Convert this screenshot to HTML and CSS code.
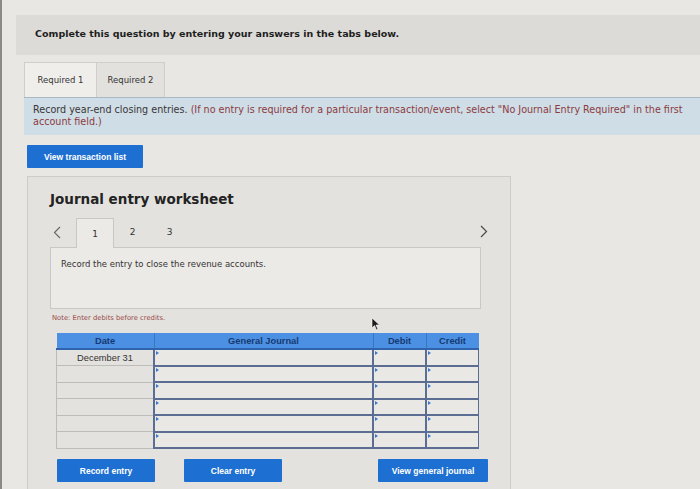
FILE: index.html
```html
<!DOCTYPE html>
<html lang="en">
<head>
    <meta charset="UTF-8">
    <meta name="viewport" content="width=device-width, initial-scale=1.0">
    <title>Journal entry worksheet</title>
    <link rel="stylesheet" href="styles.css">
</head>
<body>
    <div class="page">
        <div class="banner">Complete this question by entering your answers in the tabs below.</div>
        <div class="content">
            <div class="tabs">
                <div class="tab active">Required 1</div>
                <div class="tab">Required 2</div>
            </div>
            <p class="instructions">Record year-end closing entries. <span class="hint">(If no entry is required for a particular transaction/event, select "No Journal Entry Required" in the first account field.)</span></p>
            <button class="btn btn-list">View transaction list</button>

            <div class="worksheet">
                <h2>Journal entry worksheet</h2>
                <div class="pager">
                    <span class="arrow"><svg width="8" height="13" viewBox="0 0 8 13"><polyline points="7,1 1.5,6.5 7,12" fill="none" stroke="#6a6a6a" stroke-width="1.2"/></svg></span>
                    <span class="page-tab active">1</span>
                    <span class="page-tab">2</span>
                    <span class="page-tab">3</span>
                    <span class="arrow next"><svg width="8" height="13" viewBox="0 0 8 13"><polyline points="1,1 6.5,6.5 1,12" fill="none" stroke="#4a4a4a" stroke-width="1.2"/></svg></span>
                </div>
                <div class="entry-box">Record the entry to close the revenue accounts.</div>
                <p class="note">Note: Enter debits before credits.</p>
                <table class="journal">
                    <thead>
                        <tr>
                            <th class="c-date">Date</th>
                            <th class="c-gj">General Journal</th>
                            <th class="c-amt">Debit</th>
                            <th class="c-amt">Credit</th>
                        </tr>
                    </thead>
                    <tbody>
                        <tr><td class="date">December 31</td><td class="in"></td><td class="in"></td><td class="in"></td></tr>
                        <tr><td class="date"></td><td class="in"></td><td class="in"></td><td class="in"></td></tr>
                        <tr><td class="date"></td><td class="in"></td><td class="in"></td><td class="in"></td></tr>
                        <tr><td class="date"></td><td class="in"></td><td class="in"></td><td class="in"></td></tr>
                        <tr><td class="date"></td><td class="in"></td><td class="in"></td><td class="in"></td></tr>
                        <tr><td class="date"></td><td class="in"></td><td class="in"></td><td class="in"></td></tr>
                    </tbody>
                </table>
                <div class="actions">
                    <button class="btn btn-record">Record entry</button>
                    <button class="btn btn-clear">Clear entry</button>
                    <button class="btn btn-view">View general journal</button>
                </div>
                <svg class="cursor" width="10" height="14" viewBox="0 0 10 14"><path d="M1 1 L1 11 L3.5 8.5 L5.5 13 L7 12.3 L5 8 L8.5 8 Z" fill="#1c1c1c" stroke="#fff" stroke-width="0.6"/></svg>
            </div>
        </div>
    </div>
</body>
</html>
```
FILE: styles.css
```css
body { margin: 0; background: #e9e7e3; font-family: "DejaVu Sans", Verdana, sans-serif; color: #2b2b2b; height: 489px; overflow: hidden; }
.page { padding: 15px 0 0 14px; border-left: 2px solid #8a8986; height: 100%; box-sizing: border-box; }
.banner { height: 40px; background: #dcdbd7; padding-left: 19px; display: flex; align-items: center; font-weight: bold; font-size: 9.5px; color: #1e1e1e; padding-bottom: 3px; box-sizing: border-box; }
.content { padding-left: 8px; }
.tabs { display: flex; margin-top: 7px; height: 35px; }
.tab { width: 70px; display: flex; align-items: center; justify-content: center; font-size: 8.5px; color: #333; background: #e2e1dd; border: 1px solid #cfcecb; border-bottom: none; }
.tab.active { background: #efeeeb; width: 71px; }
.tab + .tab { width: 67px; border-left: none; }
.instructions { margin: 0; background: #cfdde6; border-top: 1px solid #a8b9c6; padding: 6px 3px 6px 9px; font-size: 9.6px; line-height: 12px; height: 25px; color: #3a3536; }
.hint { color: #8c3b3f; }
.btn { background: #1d6fd1; color: #fff; border: none; font-family: "Liberation Sans", Arial, sans-serif; font-weight: bold; font-size: 8.5px; height: 23px; border-radius: 1px; padding: 0; }
.btn-list { margin: 10px 0 0 3px; width: 116px; }
.worksheet { position: relative; margin: 8px 0 0 3px; width: 484px; height: 320px; background: #e3e2de; border: 1px solid #cdccc8; box-sizing: border-box; padding: 0 0 0 22px; }
.worksheet h2 { margin: 14px 0 0; font-size: 13.5px; font-weight: bold; color: #232323; }
.pager { display: flex; align-items: flex-end; height: 31px; margin-top: 9px; position: relative; font-size: 9px; color: #333; }
.arrow { width: 23px; padding-left: 3px; align-self: center; line-height: 0; margin-top: 2px; }
.arrow.next { position: absolute; right: 22px; top: 9px; width: auto; padding: 0; margin: 0; }
.page-tab { width: 37px; height: 30px; display: flex; align-items: center; justify-content: center; }
.page-tab.active { background: #eceae7; border: 1px solid #c9c8c4; border-bottom: none; width: 36px; height: 29px; margin-bottom: -1px; position: relative; z-index: 1; }
.entry-box { width: 431px; height: 62px; box-sizing: border-box; background: #eceae6; border: 1px solid #c9c8c4; padding: 11px 10px; font-size: 8.5px; color: #333; }
.note { margin: 5px 0 0 2px; font-size: 6.8px; color: #9b4a4a; }
.journal { margin: 11px 0 0 6px; border-collapse: collapse; width: 419px; table-layout: fixed; }
.journal th { background: #4b90e2; color: #163a73; font-family: "Liberation Sans", Arial, sans-serif; font-size: 9.3px; height: 15px; padding: 0; border-left: 1px solid #3a76c0; border-bottom: 2px solid #2f63ad; }
.journal th:first-child { border-left: none; }
.c-date { width: 97px; }
.c-gj { width: 218px; }
.c-amt { width: 52px; }
.journal td { height: 14.5px; padding: 0; font-family: "Liberation Sans", Arial, sans-serif; font-size: 9.3px; color: #333; }
.journal td.date { text-align: center; border: 1px solid #bdbcb8; }
.journal td.in { position: relative; border: 1px solid #5c6d93; border-left-width: 2px; border-bottom-width: 2px; background: #e9e8e4; }
.journal td.in::before { content: ""; position: absolute; left: 1px; top: 1px; border-left: 3px solid #3d78c9; border-top: 2px solid transparent; border-bottom: 2px solid transparent; }
.actions { display: flex; margin: 10px 0 0 7px; }
.btn-record { width: 98px; }
.btn-clear { width: 98px; margin-left: 29px; }
.btn-view { width: 110px; margin-left: 96px; }
.cursor { position: absolute; left: 343px; top: 140px; }
```
